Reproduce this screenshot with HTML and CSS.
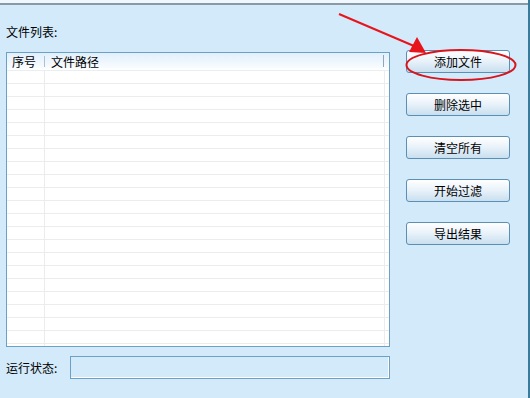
FILE: index.html
```html
<!DOCTYPE html>
<html lang="zh">
<head>
<meta charset="utf-8">
<link rel="stylesheet" href="styles.css">
</head>
<body>
<div class="window">
  <div class="topbar"></div>
  <div class="main">
    <div class="left">
      <div class="label">文件列表:</div>
      <div class="list">
        <div class="list-head">
          <div class="col-num">序号</div>
          <div class="col-path">文件路径</div>
        </div>
        <div class="rows">
          <div class="row"><div class="c1"></div><div class="c2"></div></div>
          <div class="row"><div class="c1"></div><div class="c2"></div></div>
          <div class="row"><div class="c1"></div><div class="c2"></div></div>
          <div class="row"><div class="c1"></div><div class="c2"></div></div>
          <div class="row"><div class="c1"></div><div class="c2"></div></div>
          <div class="row"><div class="c1"></div><div class="c2"></div></div>
          <div class="row"><div class="c1"></div><div class="c2"></div></div>
          <div class="row"><div class="c1"></div><div class="c2"></div></div>
          <div class="row"><div class="c1"></div><div class="c2"></div></div>
          <div class="row"><div class="c1"></div><div class="c2"></div></div>
          <div class="row"><div class="c1"></div><div class="c2"></div></div>
          <div class="row"><div class="c1"></div><div class="c2"></div></div>
          <div class="row"><div class="c1"></div><div class="c2"></div></div>
          <div class="row"><div class="c1"></div><div class="c2"></div></div>
          <div class="row"><div class="c1"></div><div class="c2"></div></div>
          <div class="row"><div class="c1"></div><div class="c2"></div></div>
          <div class="row"><div class="c1"></div><div class="c2"></div></div>
          <div class="row"><div class="c1"></div><div class="c2"></div></div>
          <div class="row"><div class="c1"></div><div class="c2"></div></div>
          <div class="row"><div class="c1"></div><div class="c2"></div></div>
          <div class="row"><div class="c1"></div><div class="c2"></div></div>
          <div class="row"><div class="c1"></div><div class="c2"></div></div>
        </div>
      </div>
      <div class="status">
        <div class="status-label">运行状态:</div>
        <div class="status-box"></div>
      </div>
    </div>
    <div class="right">
      <button class="btn">添加文件</button>
      <button class="btn">删除选中</button>
      <button class="btn">清空所有</button>
      <button class="btn">开始过滤</button>
      <button class="btn">导出结果</button>
    </div>
  </div>
  <svg class="annot" width="530" height="398" viewBox="0 0 530 398">
    <line x1="339" y1="14" x2="414" y2="46" stroke="#e8141c" stroke-width="2"/>
    <polygon points="426,53 409,52 417,37" fill="#e8141c"/>
    <ellipse cx="461" cy="65" rx="54.5" ry="15" fill="none" stroke="#d8141c" stroke-width="2"/>
  </svg>
</div>
</body>
</html>
```

FILE: styles.css
```css
* { box-sizing: border-box; }
html, body { margin: 0; padding: 0; }
body {
  width: 530px;
  height: 398px;
  overflow: hidden;
  font-family: "Noto Sans CJK SC", "Noto Sans", sans-serif;
  font-size: 12px;
  color: #000;
}
.window {
  position: relative;
  width: 530px;
  height: 398px;
  background: #d3eafb;
  border-right: 2px solid #3a7a9a;
}
.topbar {
  height: 5px;
  background: #f0f7fd;
  border-bottom: 2px solid #8b98a6;
}
.main {
  display: flex;
  padding-left: 6px;
}
.left {
  width: 384px;
  display: flex;
  flex-direction: column;
}
.label {
  height: 14px;
  line-height: 14px;
  margin-top: 20px;
}
.list {
  margin-top: 13px;
  height: 295px;
  background: #fff;
  border: 1px solid #6aa1c4;
  overflow: hidden;
}
.list-head {
  height: 18px;
  display: flex;
  background: linear-gradient(#e2f0fc, #f3f9fe 70%, #ffffff);
  border-bottom: 1px solid #e9eef2;
  line-height: 17px;
}
.col-num {
  width: 38px;
  padding-left: 5px;
  position: relative;
}
.col-num::after {
  content: "";
  position: absolute;
  right: 0;
  top: 3px;
  width: 1px;
  height: 11px;
  background: #a9c1d3;
}
.col-path {
  width: 339px;
  padding-left: 6px;
  position: relative;
}
.col-path::after {
  content: "";
  position: absolute;
  right: 0;
  top: 2px;
  width: 1px;
  height: 12px;
  background: #8aa8bf;
}
.row {
  height: 13px;
  display: flex;
  border-bottom: 1px solid #ececec;
}
.c1 {
  width: 38px;
  border-right: 1px solid #ececec;
}
.c2 {
  width: 340px;
  border-right: 1px solid #ececec;
}
.status {
  display: flex;
  align-items: center;
  margin-top: 9px;
  height: 23px;
}
.status-label {
  width: 64px;
}
.status-box {
  flex: 1;
  height: 23px;
  border: 1px solid #6aa1c4;
  box-shadow: inset -1px -1px 0 #ffffff;
  background: #d3eafb;
}
.right {
  display: flex;
  flex-direction: column;
  gap: 20px;
  margin-left: 16px;
  padding-top: 45px;
}
.btn {
  width: 104px;
  height: 23px;
  padding: 0;
  font-family: "Noto Sans CJK SC", "Noto Sans", sans-serif;
  font-size: 12px;
  color: #000;
  border: 1px solid #5c8fb4;
  border-radius: 3px;
  background: linear-gradient(#ffffff, #eaf3fa 45%, #c9dfef);
  line-height: 20px;
}
.annot {
  position: absolute;
  left: 0;
  top: 0;
  pointer-events: none;
}
```
